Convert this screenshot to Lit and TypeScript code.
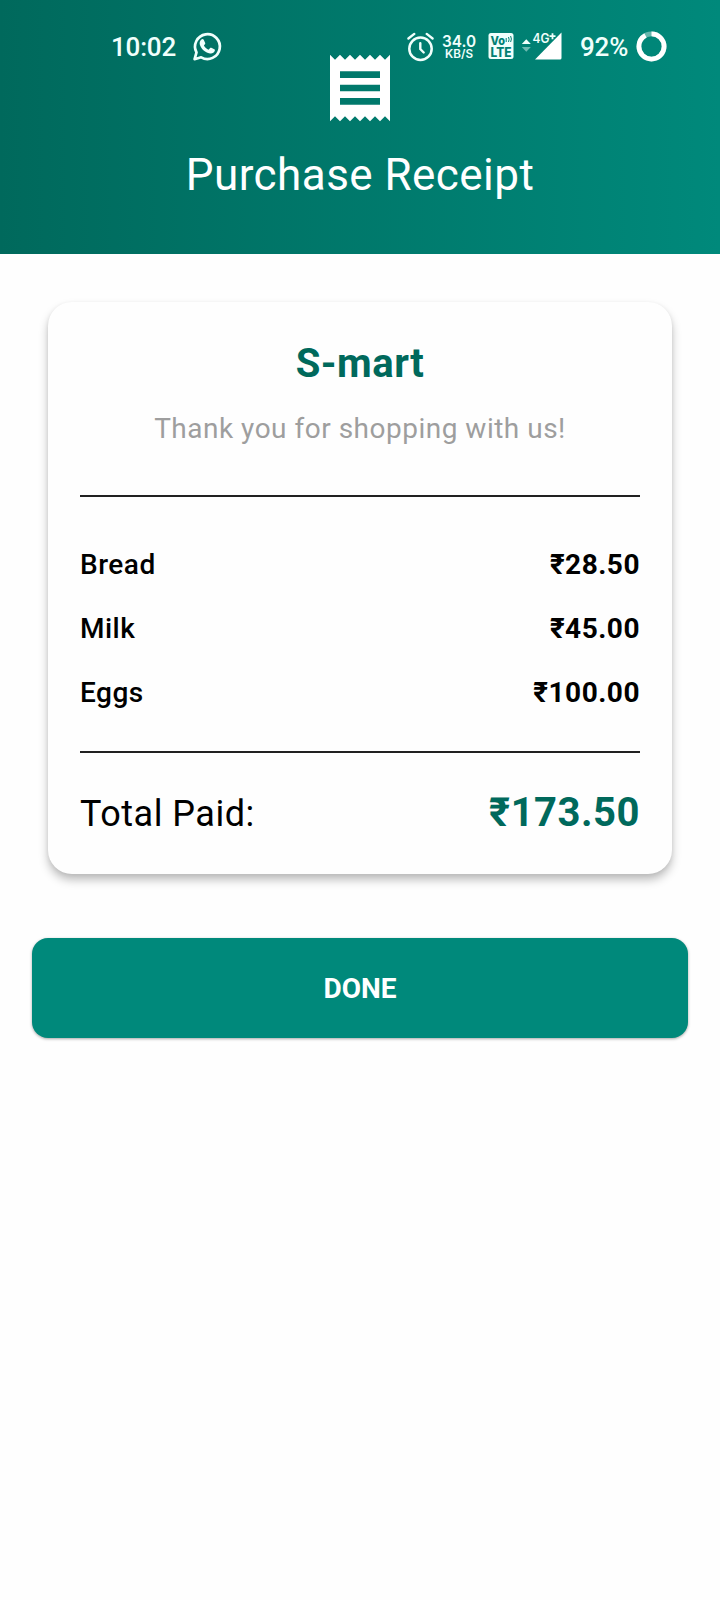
import { LitElement, html, css } from "lit";
import { customElement, property } from "lit/decorators.js";

@customElement("status-bar")
class StatusBar extends LitElement {
  static styles = css`
    :host {
      display: flex;
      align-items: center;
      box-sizing: border-box;
      height: 92px;
      padding: 0 53px 0 111px;
      color: #f0fffc;
      font: 500 26px/30px Roboto, sans-serif;
    }
    svg { display: block; flex: none; overflow: visible; }
    .time { width: 66px; margin-right: 16px; padding-top: 2px; white-space: nowrap; letter-spacing: -0.2px; }
    .spacer { flex: 1; }
    .speed { width: 36px; margin: 0 11px 0 7px; }
    .volte { margin-right: 7px; }
    .signal { margin-right: 18px; }
    .battery { width: 48px; margin-right: 8px; padding-top: 2px; white-space: nowrap; letter-spacing: -0.2px; }
  `;

  render() {
    return html`
      <span class="time">10:02</span>
      <svg width="28" height="29" viewBox="0 0 28 29" fill="none">
        <path d="M1.6 27.2 3.5 20.4A12.4 12.4 0 1 1 8.2 25.3Z" stroke="#f0fffc" stroke-width="2.7" stroke-linejoin="round" />
        <path d="M8.4 7.6c.7-.8 1.800-.7 2.300.1l1.500 3.200c.2.600 0 1-.3 1.400l-1 1.200c1.200 2.100 2.600 3.400 4.700 4.300l1.500-1.800c.3-.4.8-.4 1.200-.2l3 1.500c.6.3.7.8.5 1.400-.8 2.200-2.700 3.100-4.800 2.700-5.200-1.100-9-4.800-10.200-9-.5-1.800.2-3.600 1.600-4.800Z" fill="#f0fffc" />
      </svg>
      <span class="spacer"></span>
      <svg width="27" height="29" viewBox="0 0 27 29" fill="none" stroke="#f0fffc" stroke-linecap="round">
        <circle cx="13.500" cy="16.700" r="11.200" stroke-width="2.500" />
        <path d="M13.300 11.200V17.100L16.700 20.500M1.400 6.500 7.300 1.900M25.600 6.500 19.700 1.900" stroke-width="2.400" />
      </svg>
      <svg class="speed" width="36" height="29" viewBox="0 0 36 29" fill="#f0fffc" font-family="Inter, sans-serif" font-weight="600">
        <text x="18" y="15" font-size="16" text-anchor="middle" textLength="34" lengthAdjust="spacingAndGlyphs">34.0</text>
        <text x="18" y="25.800" font-size="11.500" text-anchor="middle" textLength="28" lengthAdjust="spacingAndGlyphs">KB/S</text>
      </svg>
      <svg class="volte" width="26" height="26" viewBox="0 0 26 26" font-family="Inter, sans-serif" font-weight="800" fill="#008073">
        <rect x=".5" y="0" width="25" height="26" rx="2.500" fill="#f0fffc" />
        <text x="2.500" y="11.500" font-size="12" textLength="14.500" lengthAdjust="spacingAndGlyphs">Vo</text>
        <path d="M18.200 5v4M20.500 4q1.200 2.500 0 5M22.600 3q1.600 3 0 6" fill="none" stroke="#008073" stroke-width="1" />
        <text x="2.500" y="23.500" font-size="13" textLength="21" lengthAdjust="spacingAndGlyphs">LTE</text>
      </svg>
      <svg class="signal" width="41" height="28" viewBox="0 0 41 28" fill="#f0fffc">
        <path d="M.8 12.100 5.300 7.200 9.800 12.100Z" />
        <path d="M.8 15H9.800L5.300 19.700Z" opacity=".45" />
        <path d="M14 27.500 40.500 .5V26Q40.500 27.500 39 27.500Z" fill="#fff" />
        <text x="11.500" y="10.500" font-family="Inter, sans-serif" font-size="12.500" font-weight="600" textLength="17" lengthAdjust="spacingAndGlyphs">4G</text>
        <path d="M31.500 1.200V7.200M28.500 4.200H34.500" stroke="#f0fffc" stroke-width="1.800" />
      </svg>
      <span class="battery">92%</span>
      <svg width="31" height="31" viewBox="0 0 31 31" fill="none" stroke-width="4.800">
        <circle cx="15.500" cy="15.500" r="12.600" stroke="#68b7ae" />
        <circle cx="15.500" cy="15.500" r="12.600" stroke="#fff" pathLength="100" stroke-dasharray="92 8" transform="rotate(-90 15.500 15.500)" />
      </svg>
    `;
  }
}

@customElement("receipt-row")
class ReceiptRow extends LitElement {
  @property() label = "";
  @property() price = "";

  static styles = css`
    :host { display: flex; justify-content: space-between; line-height: 34px; font-size: 28px; }
    .label { font-weight: 500; letter-spacing: 0.5px; }
    .price { font-weight: 700; letter-spacing: 0.5px; }
  `;

  render() {
    return html`<span class="label">${this.label}</span><span class="price">${this.price}</span>`;
  }
}

@customElement("app-root")
class AppRoot extends LitElement {
  private items = [
    { label: "Bread", price: "₹28.50" },
    { label: "Milk", price: "₹45.00" },
    { label: "Eggs", price: "₹100.00" },
  ];

  static styles = css`
    :host {
      display: block;
      position: relative;
      min-height: 1600px;
      background: #fefefe;
      color: #000;
      font-family: Roboto, sans-serif;
    }
    .status { position: absolute; top: 0; left: 0; right: 0; }
    .header {
      display: flex;
      flex-direction: column;
      align-items: center;
      box-sizing: border-box;
      height: 254px;
      padding-top: 48px;
      background: linear-gradient(90deg, #00695c, #00897b);
      color: #fff;
    }
    .title { margin: 21px 0 0; font-size: 44px; line-height: 52px; font-weight: 400; letter-spacing: 0.45px; }
    .card {
      display: flex;
      flex-direction: column;
      box-sizing: border-box;
      height: 572px;
      margin: 48px 48px 0;
      padding: 38px 32px 0;
      border-radius: 24px;
      background: #fefefe;
      box-shadow: 0 6px 10px rgba(0, 0, 0, 0.25), 0 1px 4px rgba(0, 0, 0, 0.06);
    }
    .store { margin: 0; text-align: center; font-size: 40px; line-height: 48px; font-weight: 700; color: #00695c; letter-spacing: 0.5px; }
    .thanks { margin: 24px 0 49px; text-align: center; font-size: 28px; line-height: 34px; color: #9e9e9e; letter-spacing: 0.5px; }
    .rule { height: 2px; background: #212121; }
    .items { display: flex; flex-direction: column; gap: 30px; margin: 51px 0 41px; }
    .total { display: flex; justify-content: space-between; margin-top: 36px; line-height: 48px; }
    .total-label { padding-top: 1px; font-size: 36px; letter-spacing: 0.5px; }
    .total-price { font-size: 40px; font-weight: 700; color: #00695c; letter-spacing: 0.5px; }
    .done {
      display: block;
      width: 656px;
      height: 100px;
      margin: 64px 32px 0;
      padding: 2px 0 0;
      border: 0;
      border-radius: 16px;
      background: #00897b;
      color: #fff;
      font: 700 28px/34px Roboto, sans-serif;
      box-shadow: 0 1px 3px rgba(0, 0, 0, 0.35);
    }
  `;

  render() {
    return html`
      <header class="header">
        <svg width="80" height="80" viewBox="0 0 24 24" fill="#fff">
          <path d="M18 17H6v-2h12v2zm0-4H6v-2h12v2zm0-4H6V7h12v2zM3 22l1.500-1.500L6 22l1.500-1.500L9 22l1.500-1.500L12 22l1.500-1.500L15 22l1.500-1.500L18 22l1.500-1.500L21 22V2l-1.500 1.500L18 2l-1.500 1.500L15 2l-1.500 1.500L12 2l-1.500 1.500L9 2 7.500 3.500 6 2 4.500 3.500 3 2v20z" />
        </svg>
        <h1 class="title">Purchase Receipt</h1>
      </header>
      <status-bar class="status"></status-bar>
      <section class="card">
        <h2 class="store">S-mart</h2>
        <p class="thanks">Thank you for shopping with us!</p>
        <div class="rule"></div>
        <div class="items">
          ${this.items.map((i) => html`<receipt-row .label=${i.label} .price=${i.price}></receipt-row>`)}
        </div>
        <div class="rule"></div>
        <div class="total">
          <span class="total-label">Total Paid:</span>
          <span class="total-price">₹173.50</span>
        </div>
      </section>
      <button class="done">DONE</button>
    `;
  }
}
